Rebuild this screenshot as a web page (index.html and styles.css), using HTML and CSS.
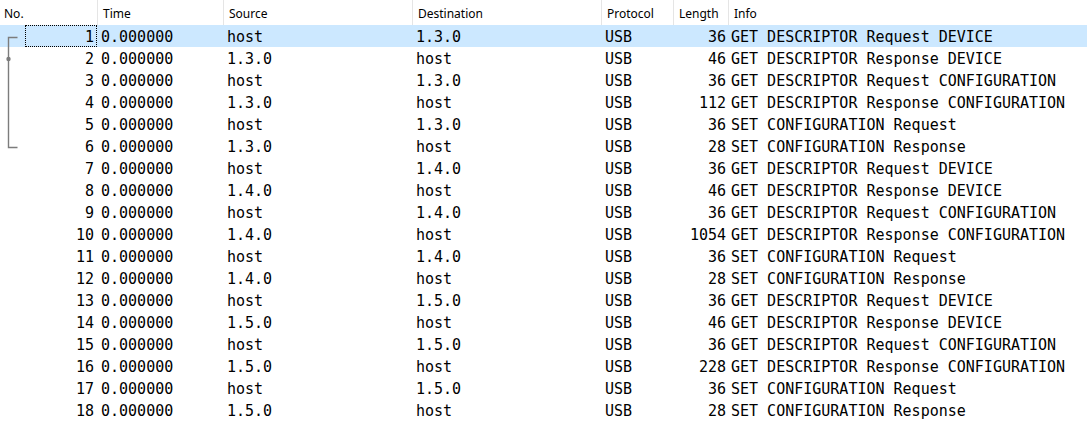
FILE: index.html
```html
<!DOCTYPE html>
<html>
<head>
<meta charset="utf-8">
<link rel="stylesheet" href="styles.css">
</head>
<body>
<div class="list">
  <div class="head">
    <div class="h no">No.</div>
    <div class="h">Time</div>
    <div class="h">Source</div>
    <div class="h">Destination</div>
    <div class="h">Protocol</div>
    <div class="h">Length</div>
    <div class="h last">Info</div>
  </div>
  <div class="rows">
    <svg class="related" width="24" height="130" viewBox="0 0 24 130">
      <path d="M17.5 12.5 H8.5 V122.5 H17.5" fill="none" stroke="#7c7c7c" stroke-width="1.4"/>
      <circle cx="8.5" cy="34" r="2.2" fill="#7c7c7c"/>
    </svg>
    <div class="row sel"><div class="c num"><span class="nb">1</span></div><div class="c">0.000000</div><div class="c">host</div><div class="c">1.3.0</div><div class="c">USB</div><div class="c len">36</div><div class="c info">GET DESCRIPTOR Request DEVICE</div></div>
    <div class="row"><div class="c num"><span class="nb">2</span></div><div class="c">0.000000</div><div class="c">1.3.0</div><div class="c">host</div><div class="c">USB</div><div class="c len">46</div><div class="c info">GET DESCRIPTOR Response DEVICE</div></div>
    <div class="row"><div class="c num"><span class="nb">3</span></div><div class="c">0.000000</div><div class="c">host</div><div class="c">1.3.0</div><div class="c">USB</div><div class="c len">36</div><div class="c info">GET DESCRIPTOR Request CONFIGURATION</div></div>
    <div class="row"><div class="c num"><span class="nb">4</span></div><div class="c">0.000000</div><div class="c">1.3.0</div><div class="c">host</div><div class="c">USB</div><div class="c len">112</div><div class="c info">GET DESCRIPTOR Response CONFIGURATION</div></div>
    <div class="row"><div class="c num"><span class="nb">5</span></div><div class="c">0.000000</div><div class="c">host</div><div class="c">1.3.0</div><div class="c">USB</div><div class="c len">36</div><div class="c info">SET CONFIGURATION Request</div></div>
    <div class="row"><div class="c num"><span class="nb">6</span></div><div class="c">0.000000</div><div class="c">1.3.0</div><div class="c">host</div><div class="c">USB</div><div class="c len">28</div><div class="c info">SET CONFIGURATION Response</div></div>
    <div class="row"><div class="c num"><span class="nb">7</span></div><div class="c">0.000000</div><div class="c">host</div><div class="c">1.4.0</div><div class="c">USB</div><div class="c len">36</div><div class="c info">GET DESCRIPTOR Request DEVICE</div></div>
    <div class="row"><div class="c num"><span class="nb">8</span></div><div class="c">0.000000</div><div class="c">1.4.0</div><div class="c">host</div><div class="c">USB</div><div class="c len">46</div><div class="c info">GET DESCRIPTOR Response DEVICE</div></div>
    <div class="row"><div class="c num"><span class="nb">9</span></div><div class="c">0.000000</div><div class="c">host</div><div class="c">1.4.0</div><div class="c">USB</div><div class="c len">36</div><div class="c info">GET DESCRIPTOR Request CONFIGURATION</div></div>
    <div class="row"><div class="c num"><span class="nb">10</span></div><div class="c">0.000000</div><div class="c">1.4.0</div><div class="c">host</div><div class="c">USB</div><div class="c len">1054</div><div class="c info">GET DESCRIPTOR Response CONFIGURATION</div></div>
    <div class="row"><div class="c num"><span class="nb">11</span></div><div class="c">0.000000</div><div class="c">host</div><div class="c">1.4.0</div><div class="c">USB</div><div class="c len">36</div><div class="c info">SET CONFIGURATION Request</div></div>
    <div class="row"><div class="c num"><span class="nb">12</span></div><div class="c">0.000000</div><div class="c">1.4.0</div><div class="c">host</div><div class="c">USB</div><div class="c len">28</div><div class="c info">SET CONFIGURATION Response</div></div>
    <div class="row"><div class="c num"><span class="nb">13</span></div><div class="c">0.000000</div><div class="c">host</div><div class="c">1.5.0</div><div class="c">USB</div><div class="c len">36</div><div class="c info">GET DESCRIPTOR Request DEVICE</div></div>
    <div class="row"><div class="c num"><span class="nb">14</span></div><div class="c">0.000000</div><div class="c">1.5.0</div><div class="c">host</div><div class="c">USB</div><div class="c len">46</div><div class="c info">GET DESCRIPTOR Response DEVICE</div></div>
    <div class="row"><div class="c num"><span class="nb">15</span></div><div class="c">0.000000</div><div class="c">host</div><div class="c">1.5.0</div><div class="c">USB</div><div class="c len">36</div><div class="c info">GET DESCRIPTOR Request CONFIGURATION</div></div>
    <div class="row"><div class="c num"><span class="nb">16</span></div><div class="c">0.000000</div><div class="c">1.5.0</div><div class="c">host</div><div class="c">USB</div><div class="c len">228</div><div class="c info">GET DESCRIPTOR Response CONFIGURATION</div></div>
    <div class="row"><div class="c num"><span class="nb">17</span></div><div class="c">0.000000</div><div class="c">host</div><div class="c">1.5.0</div><div class="c">USB</div><div class="c len">36</div><div class="c info">SET CONFIGURATION Request</div></div>
    <div class="row"><div class="c num"><span class="nb">18</span></div><div class="c">0.000000</div><div class="c">1.5.0</div><div class="c">host</div><div class="c">USB</div><div class="c len">28</div><div class="c info">SET CONFIGURATION Response</div></div>
  </div>
</div>
</body>
</html>
```
FILE: styles.css
```css
html, body {
  margin: 0;
  padding: 0;
  background: #ffffff;
}

.list {
  width: 1087px;
  height: 425px;
  overflow: hidden;
}

.head,
.row {
  display: grid;
  grid-template-columns: 98px 126px 189px 189px 72px 55px 1fr;
}

.head {
  height: 25px;
  font-family: "Noto Sans", "Open Sans", sans-serif;
  font-size: 12px;
  color: #000000;
}

.h {
  border-right: 1px solid #e5e5e5;
  padding-left: 5px;
  line-height: 27px;
  white-space: nowrap;
}

.h.no {
  padding-left: 4px;
}

.h.last {
  border-right: none;
}

.rows {
  position: relative;
}

.related {
  position: absolute;
  left: 0;
  top: 0;
  z-index: 2;
}

.row {
  height: 22px;
  font-family: "DejaVu Sans Mono", "Liberation Mono", monospace;
  font-size: 15px;
  color: #000000;
  white-space: nowrap;
}

.row.sel {
  background: #cce8ff;
}

.c {
  padding-left: 3px;
  padding-top: 2px;
  line-height: 20px;
  overflow: hidden;
}

.c.num {
  padding-top: 0;
  padding-left: 25px;
  padding-right: 1px;
}

.nb {
  display: block;
  height: 22px;
  box-sizing: border-box;
  border: 1px dotted transparent;
  text-align: right;
  padding-right: 2px;
  padding-top: 1px;
  line-height: 20px;
}

.sel .nb {
  border-color: #000000;
}

.c.len {
  text-align: right;
  padding-left: 0;
  padding-right: 3px;
}

.c.info {
  padding-left: 2px;
}
```
